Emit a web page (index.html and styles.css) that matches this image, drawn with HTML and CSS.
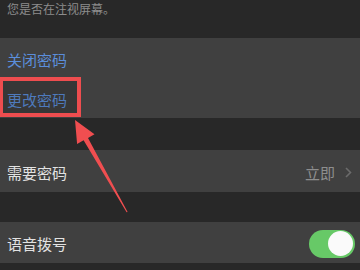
FILE: index.html
```html
<!DOCTYPE html>
<html lang="zh">
<head>
<meta charset="utf-8">
<link rel="stylesheet" href="styles.css">
</head>
<body>
<div class="page">
  <div class="caption">您是否在注视屏幕。</div>
  <div class="group">
    <div class="row link">关闭密码</div>
    <div class="row link">更改密码</div>
  </div>
  <div class="gap g1"></div>
  <div class="group">
    <div class="row tall">
      <span class="label">需要密码</span>
      <span class="value">立即
        <svg class="chev" width="7" height="11" viewBox="0 0 7 11"><path d="M1 1 L5.5 5.5 L1 10" fill="none" stroke="#6b6b6b" stroke-width="1.6"/></svg>
      </span>
    </div>
  </div>
  <div class="gap g2"></div>
  <div class="group">
    <div class="row mid">
      <span class="label">语音拨号</span>
      <span class="toggle"><span class="knob"></span></span>
    </div>
  </div>

  <div class="highlight"></div>
  <svg class="arrow" width="360" height="270" viewBox="0 0 360 270">
    <polygon fill="#f04e50" points="75,120 94.5,134.2 88,137.9 127.6,212 126.6,212.3 83.6,140.3 77.1,144"/>
  </svg>
</div>
</body>
</html>
```
FILE: styles.css
```css
html, body {
  margin: 0;
  padding: 0;
  background: #282828;
}
.page {
  position: relative;
  width: 360px;
  height: 270px;
  overflow: hidden;
  font-family: "Noto Sans CJK SC", "Noto Sans", sans-serif;
}
.caption {
  height: 38px;
  padding-left: 7px;
  font-size: 12px;
  line-height: 18px;
  color: #8c8c8c;
  box-sizing: border-box;
}
.group {
  background: #404040;
}
.row {
  height: 40px;
  display: flex;
  align-items: center;
  padding: 2px 5px 0 7px;
  box-sizing: border-box;
  font-size: 15px;
  color: #e2e2e2;
  justify-content: space-between;
}
.row.link {
  color: #5b8edb;
}
.row.tall {
  height: 42px;
}
.row.mid {
  height: 41px;
}
.gap.g1 { height: 32px; }
.gap.g2 { height: 30px; }
.value {
  display: flex;
  align-items: center;
  color: #8e8e8e;
  gap: 10px;
  padding-right: 3px;
}
.chev {
  display: block;
}
.toggle {
  width: 46px;
  height: 28px;
  border-radius: 14px;
  background: #67c967;
  display: flex;
  align-items: center;
  justify-content: flex-end;
  padding-right: 2px;
  box-sizing: border-box;
}
.knob {
  width: 25px;
  height: 25px;
  border-radius: 50%;
  background: #fafafa;
}
.highlight {
  position: absolute;
  left: -1px;
  top: 77px;
  width: 82px;
  height: 40px;
  border: 4px solid #ee4d4f;
  box-sizing: border-box;
  background: rgba(0, 0, 0, 0.14);
}
.arrow {
  position: absolute;
  left: 0;
  top: 0;
}
```
